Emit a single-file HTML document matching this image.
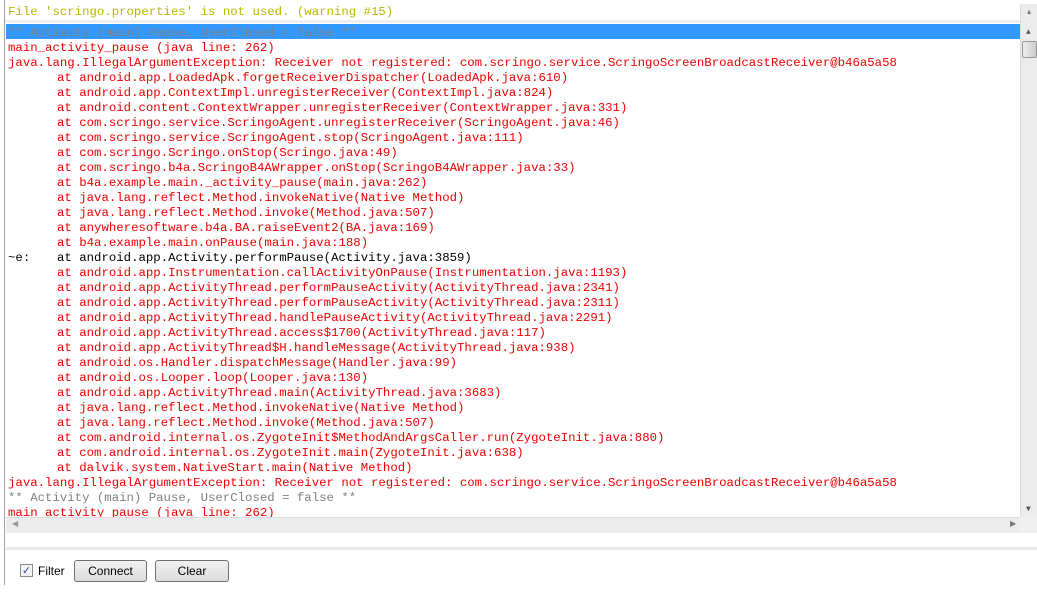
<!DOCTYPE html>
<html><head><style>
body{margin:0;width:1037px;height:585px;background:#fff;position:relative;overflow:hidden;font-family:"Liberation Mono",monospace;}
.w{position:absolute;left:0;top:2px;width:1037px;height:600px}
.l{position:absolute;left:8px;font-size:12.35px;line-height:15px;white-space:pre;color:#ee0000;}
.i{left:57px}
.g{color:#808080}
.k{color:#000}
.y{color:#b8b800}
.ui{font-family:"Liberation Sans",sans-serif;font-size:12px;position:absolute;}
.btn{position:absolute;top:560px;height:20px;border:1px solid #707070;border-radius:3px;background:linear-gradient(#f2f2f2,#dcdcdc);font-family:"Liberation Sans",sans-serif;font-size:12px;text-align:center;line-height:20px;color:#000}
</style></head><body>
<div style="position:absolute;left:4px;top:0;width:1px;height:585px;background:#a0a0a0"></div>
<div style="position:absolute;left:5px;top:20px;width:1015px;height:3px;background:#eee"></div>
<div style="position:absolute;left:6px;top:24px;width:1014px;height:15px;background:#3399ff"></div>
<div class="w">
<div class="l y" style="top:3px">File 'scringo.properties' is not used. (warning #15)</div>
<div class="l g" style="top:24px">** Activity (main) Pause, UserClosed = false **</div>
<div class="l" style="top:39px">main_activity_pause (java line: 262)</div>
<div class="l" style="top:54px">java.lang.IllegalArgumentException: Receiver not registered: com.scringo.service.ScringoScreenBroadcastReceiver@b46a5a58</div>
<div class="l i" style="top:69px">at android.app.LoadedApk.forgetReceiverDispatcher(LoadedApk.java:610)</div>
<div class="l i" style="top:84px">at android.app.ContextImpl.unregisterReceiver(ContextImpl.java:824)</div>
<div class="l i" style="top:99px">at android.content.ContextWrapper.unregisterReceiver(ContextWrapper.java:331)</div>
<div class="l i" style="top:114px">at com.scringo.service.ScringoAgent.unregisterReceiver(ScringoAgent.java:46)</div>
<div class="l i" style="top:129px">at com.scringo.service.ScringoAgent.stop(ScringoAgent.java:111)</div>
<div class="l i" style="top:144px">at com.scringo.Scringo.onStop(Scringo.java:49)</div>
<div class="l i" style="top:159px">at com.scringo.b4a.ScringoB4AWrapper.onStop(ScringoB4AWrapper.java:33)</div>
<div class="l i" style="top:174px">at b4a.example.main._activity_pause(main.java:262)</div>
<div class="l i" style="top:189px">at java.lang.reflect.Method.invokeNative(Native Method)</div>
<div class="l i" style="top:204px">at java.lang.reflect.Method.invoke(Method.java:507)</div>
<div class="l i" style="top:219px">at anywheresoftware.b4a.BA.raiseEvent2(BA.java:169)</div>
<div class="l i" style="top:234px">at b4a.example.main.onPause(main.java:188)</div>
<div class="l k" style="top:249px">~e:</div>
<div class="l i k" style="top:249px">at android.app.Activity.performPause(Activity.java:3859)</div>
<div class="l i" style="top:264px">at android.app.Instrumentation.callActivityOnPause(Instrumentation.java:1193)</div>
<div class="l i" style="top:279px">at android.app.ActivityThread.performPauseActivity(ActivityThread.java:2341)</div>
<div class="l i" style="top:294px">at android.app.ActivityThread.performPauseActivity(ActivityThread.java:2311)</div>
<div class="l i" style="top:309px">at android.app.ActivityThread.handlePauseActivity(ActivityThread.java:2291)</div>
<div class="l i" style="top:324px">at android.app.ActivityThread.access$1700(ActivityThread.java:117)</div>
<div class="l i" style="top:339px">at android.app.ActivityThread$H.handleMessage(ActivityThread.java:938)</div>
<div class="l i" style="top:354px">at android.os.Handler.dispatchMessage(Handler.java:99)</div>
<div class="l i" style="top:369px">at android.os.Looper.loop(Looper.java:130)</div>
<div class="l i" style="top:384px">at android.app.ActivityThread.main(ActivityThread.java:3683)</div>
<div class="l i" style="top:399px">at java.lang.reflect.Method.invokeNative(Native Method)</div>
<div class="l i" style="top:414px">at java.lang.reflect.Method.invoke(Method.java:507)</div>
<div class="l i" style="top:429px">at com.android.internal.os.ZygoteInit$MethodAndArgsCaller.run(ZygoteInit.java:880)</div>
<div class="l i" style="top:444px">at com.android.internal.os.ZygoteInit.main(ZygoteInit.java:638)</div>
<div class="l i" style="top:459px">at dalvik.system.NativeStart.main(Native Method)</div>
<div class="l" style="top:474px">java.lang.IllegalArgumentException: Receiver not registered: com.scringo.service.ScringoScreenBroadcastReceiver@b46a5a58</div>
<div class="l g" style="top:489px">** Activity (main) Pause, UserClosed = false **</div>
<div class="l" style="top:504px;height:11px;overflow:hidden">main activity pause (java line: 262)</div>
</div>
<!-- vertical scrollbar -->
<div style="position:absolute;left:1020px;top:4px;width:17px;height:513px;background:#ececec;border-left:1px solid #ddd"></div>
<div style="position:absolute;left:1027px;top:9px;color:#777;font-size:7px">▲</div>
<div style="position:absolute;left:1026px;top:28px;color:#555;font-size:8px">▲</div>
<div style="position:absolute;left:1022px;top:41px;width:13px;height:15px;border:1px solid #999;border-radius:2px;background:linear-gradient(90deg,#eee,#ccc)"></div>
<div style="position:absolute;left:1026px;top:505px;color:#555;font-size:8px">▼</div>
<!-- horizontal scrollbar -->
<div style="position:absolute;left:6px;top:517px;width:1014px;height:15px;background:#ececec;border-top:1px solid #ddd"></div>
<div style="position:absolute;left:12px;top:519px;color:#999;font-size:8px">◀</div>
<div style="position:absolute;left:1010px;top:519px;color:#777;font-size:8px">▶</div>
<div style="position:absolute;left:1020px;top:517px;width:17px;height:16px;background:#f0f0f0"></div>
<div style="position:absolute;left:6px;top:547px;width:1031px;height:3px;background:#e8e8e8"></div>
<!-- controls -->
<div style="position:absolute;left:20px;top:564px;width:11px;height:11px;border:1px solid #8a8a8a;background:#f4f4f4;font-size:11px;line-height:11px;color:#2a4a9a;text-align:center;font-family:'DejaVu Sans',sans-serif">✓</div>
<div class="ui" style="left:38px;top:564px">Filter</div>
<div class="btn" style="left:74px;width:71px">Connect</div>
<div class="btn" style="left:155px;width:72px">Clear</div>
</body></html>
